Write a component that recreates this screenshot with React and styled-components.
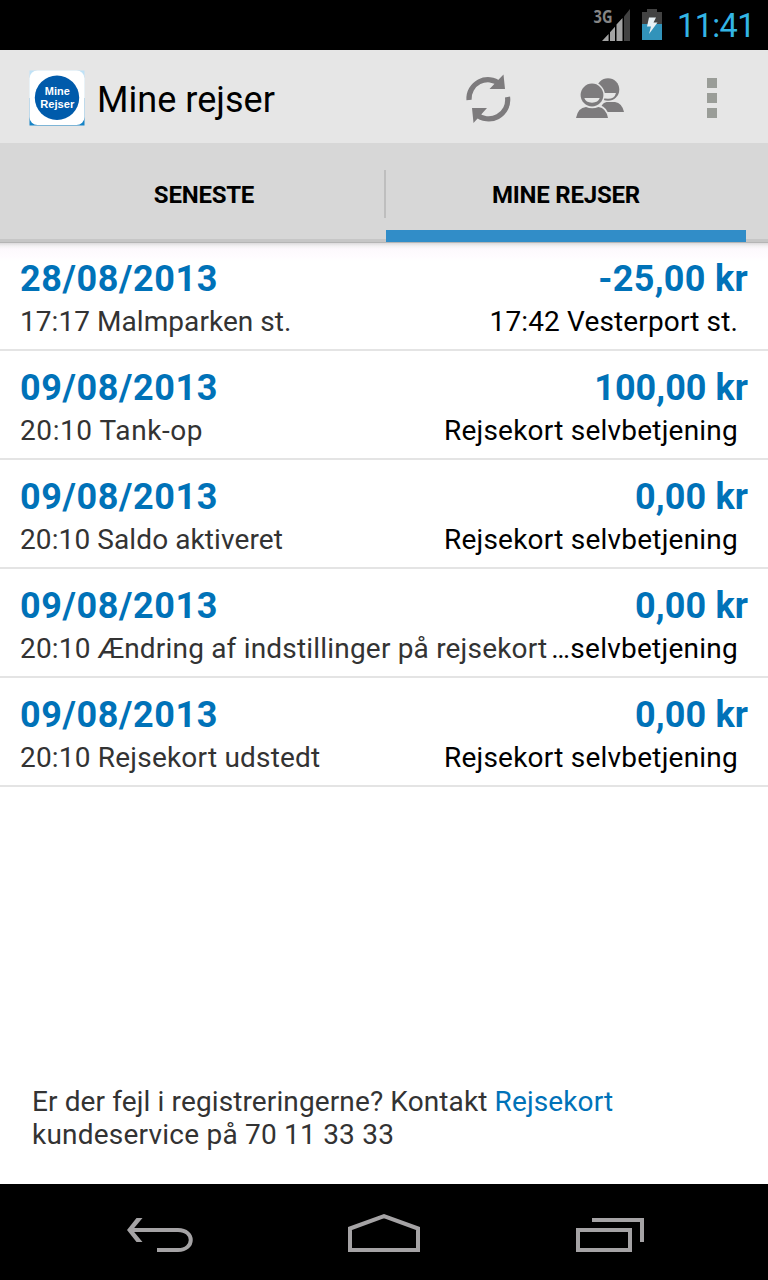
import React from 'react';
import styled, { createGlobalStyle } from 'styled-components';

const GlobalStyle = createGlobalStyle`
  * { box-sizing: border-box; }
  body { margin: 0; background: #fff; font-family: Roboto, sans-serif; }
`;

const Screen = styled.div`
  width: 768px;
  height: 1280px;
  display: flex;
  flex-direction: column;
  background: #fff;
  overflow: hidden;
`;

const Icon = styled.svg`
  display: block;
  flex: none;
`;

const StatusBar = styled.header`
  height: 50px;
  flex: none;
  display: flex;
  align-items: center;
  padding-left: 592px;
  background: #000;
`;

const Clock = styled.span`
  margin-left: 13px;
  font-size: 32.5px;
  line-height: 50px;
  padding-top: 2px;
  letter-spacing: -0.6px;
  color: #33b5e5;
`;

const ActionBar = styled.div`
  height: 93px;
  flex: none;
  display: flex;
  align-items: center;
  padding: 2px 0 0 29px;
  background: #e6e6e6;
`;

const Title = styled.h1`
  flex: 1;
  margin: 4px 0 0 12px;
  font-size: 36px;
  font-weight: 400;
  line-height: 42px;
  letter-spacing: 0.04px;
  color: #000;
`;

const Action = styled.button`
  width: 112px;
  height: 91px;
  padding: 0;
  border: 0;
  background: none;
  display: grid;
  place-items: center;
`;

const Tabs = styled.nav`
  height: 100px;
  flex: none;
  display: flex;
  padding: 0 22px 0 24px;
  background: linear-gradient(#d7d7d7 96px, #c6c6c6 96px, #c6c6c6 99px, #b5b5b5 99px);
`;

const Tab = styled.button`
  width: 360px;
  height: 99px;
  padding: 25px 0 8px;
  border: 0;
  border-bottom: 12px solid ${(p) => (p.$active ? '#318dc8' : 'transparent')};
  background: none;
  font-family: inherit;
  font-size: 24px;
  font-weight: 700;
  line-height: 28px;
  letter-spacing: -0.22px;
  color: #000;
`;

const Divider = styled.span`
  width: 2px;
  height: 48px;
  margin-top: 27px;
  background: #bebebe;
`;

const List = styled.ul`
  list-style: none;
  margin: 0;
  padding: 0;
  flex: 1;
  background: linear-gradient(#dcdadc, #f3f1f3 3px, #fdf9fd 6px, #fffcff 14px, #fff 18px);
`;

const Row = styled.li`
  height: ${(p) => (p.$first ? 108 : 109)}px;
  padding: ${(p) => (p.$first ? 15 : 16)}px 20px 0;
  border-bottom: 2px solid #e4e4e4;
`;

const Line = styled.div`
  display: flex;
  justify-content: space-between;
  white-space: nowrap;
`;

const Headline = styled.span`
  font-size: 36px;
  font-weight: 700;
  line-height: 42px;
  letter-spacing: ${(p) => p.$track || 0}px;
  color: #0072b8;
`;

const Detail = styled.span`
  font-size: 28px;
  line-height: 43px;
  margin-right: ${(p) => (p.$end ? 10 : 0)}px;
  letter-spacing: ${(p) => p.$track || 0}px;
  color: ${(p) => (p.$end ? '#000' : '#333')};
`;

const Note = styled.p`
  flex: none;
  margin: 0;
  height: 99px;
  padding-left: 32px;
  font-size: 28px;
  line-height: 33px;
  color: #333;
`;

const NoteLine = styled.span`
  display: block;
  letter-spacing: ${(p) => p.$track}px;
`;

const Link = styled.a`
  color: #0072b8;
`;

const NavBar = styled.footer`
  height: 96px;
  flex: none;
  display: flex;
  justify-content: space-between;
  align-items: center;
  padding: 0 48px;
  background: #000;
`;

const trips = [
  { date: '28/08/2013', amount: '-25,00 kr', from: '17:17 Malmparken st.', to: '17:42 Vesterport st.', amountTrack: 0.3, fromTrack: 0.06, toTrack: 0.14 },
  { date: '09/08/2013', amount: '100,00 kr', from: '20:10 Tank-op', to: 'Rejsekort selvbetjening', amountTrack: 0.03, fromTrack: 0.58, toTrack: 0.22 },
  { date: '09/08/2013', amount: '0,00 kr', from: '20:10 Saldo aktiveret', to: 'Rejsekort selvbetjening', amountTrack: 0.1, fromTrack: 0.1, toTrack: 0.22 },
  { date: '09/08/2013', amount: '0,00 kr', from: '20:10 Ændring af indstillinger på rejsekort', to: '…selvbetjening', amountTrack: 0.1, fromTrack: 0.19, toTrack: 0.25 },
  { date: '09/08/2013', amount: '0,00 kr', from: '20:10 Rejsekort udstedt', to: 'Rejsekort selvbetjening', amountTrack: 0.1, fromTrack: 0.2, toTrack: 0.22 },
];

const StatusIcons = () => (
  <Icon width="72" height="50" viewBox="592 0 72 50">
    <text x="593.5" y="23" fontFamily="Open Sans" fontSize="17" fontWeight="700" fill="#858585" textLength="19" lengthAdjust="spacingAndGlyphs">3G</text>
    <path d="M602 41L608.6 34V41ZM610 41V32.2L615 26.7V41ZM616.5 41V24.6L622.5 18V41Z" fill="#a4a4a4" />
    <path d="M624 41V16.4L630 9V41Z" fill="#424242" />
    <path d="M642 12H647V9H657V12H662V24H642Z" fill="#424242" />
    <path d="M642 24H662V40H642Z" fill="#3293ba" />
    <path d="M649 17.5H656L653.5 22.5H657.5L649 34L651 26.5H647Z" fill="#e8f1f5" />
  </Icon>
);

const Logo = () => (
  <Icon width="56" height="56" viewBox="0 0 56 56">
    <path d="M0.5 0.5H55.5V28H0.5Z" fill="#bfe2f7" />
    <path d="M0.5 28H55.5V55.5H0.5Z" fill="#1683c6" />
    <rect x="0.5" y="0.5" width="55" height="54.5" rx="8" fill="#fff" />
    <circle cx="28" cy="27.8" r="22.2" fill="#005bab" />
    <g fill="#fff" fontFamily="Liberation Sans" fontWeight="700" fontSize="11" textAnchor="middle">
      <text x="28.3" y="25.2" textLength="25" lengthAdjust="spacingAndGlyphs">Mine</text>
      <text x="28.3" y="38" textLength="34" lengthAdjust="spacingAndGlyphs">Rejser</text>
    </g>
  </Icon>
);

const RefreshIcon = () => (
  <Icon width="48" height="52" viewBox="464 72 48 52">
    <g fill="none" stroke="#7d7b7d" strokeWidth="5.2">
      <path d="M469 100A19 19 0 0 1 500 84" />
      <path d="M507.5 97A19 19 0 0 1 476 114" />
    </g>
    <path d="M503.5 74.5L505 89H489.5ZM472 108H487L473.5 123Z" fill="#7d7b7d" />
  </Icon>
);

const PeopleIcon = () => (
  <Icon width="52" height="48" viewBox="574 74 52 48">
    <circle cx="608" cy="89.5" r="11.3" fill="#7d7b7d" />
    <path d="M600 93H616A8.2 7.5 0 0 1 600 93Z" fill="#e6e6e6" />
    <path d="M600 112C601 104 604 102 608 102H615Q622 103 624 112Z" fill="#7d7b7d" />
    <circle cx="592" cy="95" r="12.9" fill="#e6e6e6" />
    <path d="M577 118C578 108 582 105 585 105H599Q608 107 609.5 118Z" fill="#e6e6e6" />
    <path d="M576 118Q578 107.5 586 107Q592 109.5 598.5 107Q606 108 608 118Z" fill="#7d7b7d" />
    <circle cx="592" cy="95" r="11.4" fill="#7d7b7d" />
    <path d="M584.3 98H599.7A7.9 6 0 0 1 584.3 98Z" fill="#e6e6e6" />
  </Icon>
);

const OverflowIcon = () => (
  <Icon width="10" height="41" viewBox="0 -1 10 41">
    <path d="M0 0H10V10H0ZM0 15H10V25H0ZM0 30H10V40H0Z" fill="#9a9d98" />
  </Icon>
);

const NavIcon = ({ children }) => (
  <Icon width="224" height="96" viewBox="0 0 224 96" fill="none" stroke="#a5a3a5" strokeWidth="4">
    {children}
  </Icon>
);

export default function App() {
  return (
    <Screen>
      <GlobalStyle />
      <StatusBar>
        <StatusIcons />
        <Clock>11:41</Clock>
      </StatusBar>
      <ActionBar>
        <Logo />
        <Title>Mine rejser</Title>
        <Action aria-label="Opdater"><RefreshIcon /></Action>
        <Action aria-label="Kontakter"><PeopleIcon /></Action>
        <Action aria-label="Mere"><OverflowIcon /></Action>
      </ActionBar>
      <Tabs>
        <Tab>SENESTE</Tab>
        <Divider />
        <Tab $active>MINE REJSER</Tab>
      </Tabs>
      <List>
        {trips.map((t, i) => (
          <Row key={i} $first={i === 0}>
            <Line>
              <Headline $track={0.6}>{t.date}</Headline>
              <Headline $track={t.amountTrack}>{t.amount}</Headline>
            </Line>
            <Line>
              <Detail $track={t.fromTrack}>{t.from}</Detail>
              <Detail $track={t.toTrack} $end>{t.to}</Detail>
            </Line>
          </Row>
        ))}
      </List>
      <Note>
        <NoteLine $track={0.12}>Er der fejl i registreringerne? Kontakt <Link>Rejsekort</Link></NoteLine>
        <NoteLine $track={0.22}>kundeservice på 70 11 33 33</NoteLine>
      </Note>
      <NavBar>
        <NavIcon>
          <path d="M82 46H130C147 46 147 66 130 66H109" />
          <path d="M79 46L88.5 34H94.5L84.5 46L94.5 58H88.5Z" fill="#a5a3a5" stroke="none" />
        </NavIcon>
        <NavIcon>
          <path d="M78 66V44.5L112 32.2L146 44.5V66Z" />
        </NavIcon>
        <NavIcon>
          <path d="M82 46H134V66H82ZM96 36H146V58" />
        </NavIcon>
      </NavBar>
    </Screen>
  );
}
